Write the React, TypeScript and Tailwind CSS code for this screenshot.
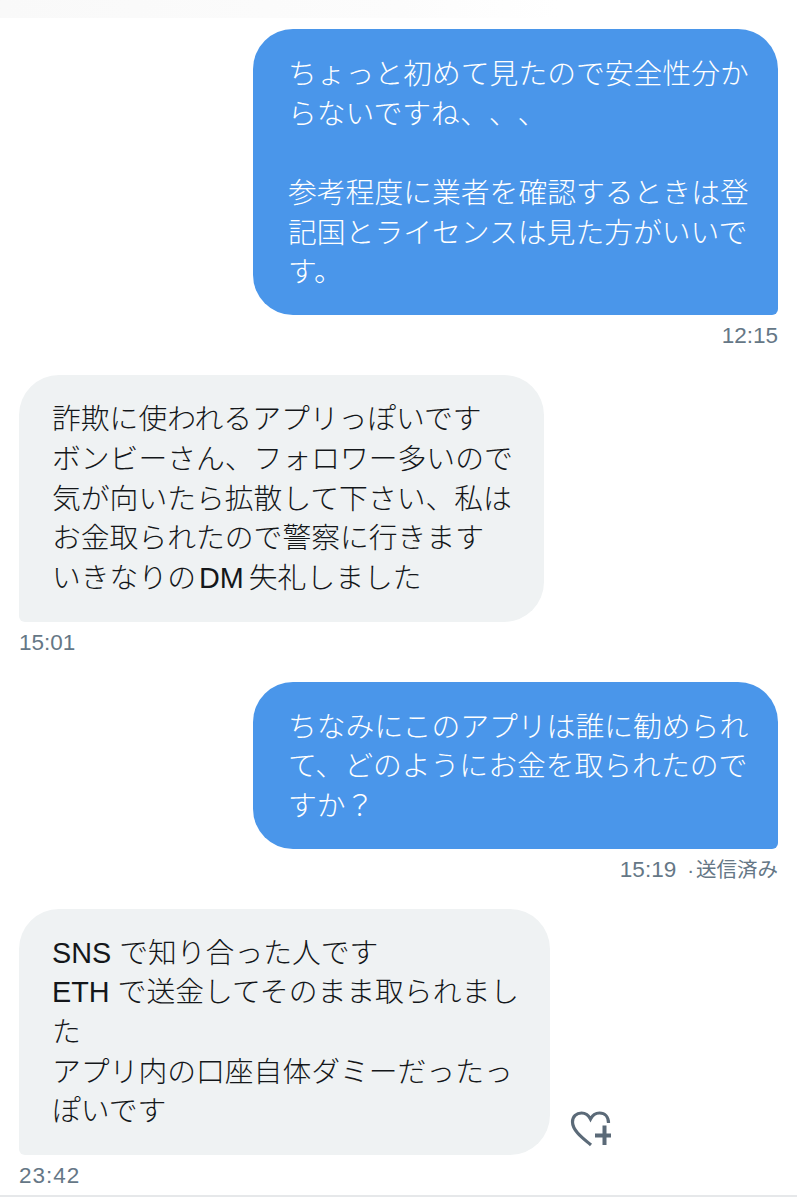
const FONT = "font-['Liberation_Sans','Noto_Sans_CJK_JP',sans-serif]";

function Sent({ lines, meta }: { lines: string[]; meta: React.ReactNode }) {
  return (
    <div className="flex flex-col items-end">
      <div className="w-[525px] rounded-[40px] rounded-br-[6px] bg-[#4a96ea] pl-[35px] pt-[26px] pb-[22px] text-[28.8px] leading-[39.7px] font-light text-white whitespace-nowrap [text-spacing-trim:space-all]">
        {lines.map((l, i) => (
          <div key={i} className="h-[39.7px]">{l}</div>
        ))}
      </div>
      <div className="mt-[7px] h-[28px] text-[22.5px] leading-[28px] text-[#657786]">{meta}</div>
    </div>
  );
}

function Received({ lines, meta, width, extra }: { lines: React.ReactNode[]; meta: React.ReactNode; width: string; extra?: React.ReactNode }) {
  return (
    <div className="flex flex-col items-start">
      <div className="flex items-end">
        <div className={`${width} rounded-[40px] rounded-bl-[6px] bg-[#eff2f3] pl-[33px] pt-[25px] pb-[23px] text-[28.8px] leading-[39.7px] font-light text-[#14171a] whitespace-nowrap [text-spacing-trim:space-all]`}>
          {lines.map((l, i) => (
            <div key={i} className="h-[39.7px]">{l}</div>
          ))}
        </div>
        {extra}
      </div>
      <div className="mt-[7px] h-[28px] text-[22.5px] leading-[28px] text-[#657786]">{meta}</div>
    </div>
  );
}

function HeartPlus() {
  return (
    <svg className="ml-[20px] mb-[6px] w-[43px] h-[38px]" viewBox="0 0 43 38" fill="none">
      <path
        d="M21 34 C14 28 2.5 20 2.5 11 C2.5 5.5 6.5 2 11.5 2 C15.5 2 18.5 4 20.5 8 C22.5 4 25.5 2 29.5 2 C35 2 38.5 6 38.5 12"
        stroke="#5b6a78"
        strokeWidth="3.2"
      />
      <path d="M34.5 14.5 V34 M25 24.5 H41" stroke="#5b6a78" strokeWidth="4" />
    </svg>
  );
}

export default function App() {
  return (
    <div className={`${FONT} w-[797px] h-[1200px] bg-white overflow-hidden flex flex-col`}>
      <div className="h-[18px] shrink-0 bg-gradient-to-r from-[#f9f9f9] via-[#fcfcfc] to-white to-70%" />
      <div className="flex-1 pt-[11px] px-[19px] flex flex-col gap-[25px]">
        <Sent
          lines={[
            "ちょっと初めて見たので安全性分か",
            "らないですね、、、",
            "\u00a0",
            "参考程度に業者を確認するときは登",
            "記国とライセンスは見た方がいいで",
            "す。",
          ]}
          meta="12:15"
        />
        <Received
          width="w-[525px]"
          lines={[
            "詐欺に使われるアプリっぽいです",
            "ボンビーさん、フォロワー多いので",
            "気が向いたら拡散して下さい、私は",
            "お金取られたので警察に行きます",
            <>いきなりの<span className="ml-[3px] mr-[5px]">DM</span>失礼しました</>,
          ]}
          meta="15:01"
        />
        <Sent
          lines={[
            "ちなみにこのアプリは誰に勧められ",
            "て、どのようにお金を取られたので",
            "すか？",
          ]}
          meta={
            <span className="flex items-center">
              15:19<span className="ml-[11px] text-[20.5px]">·</span><span className="ml-[2px] text-[20.5px]">送信済み</span>
            </span>
          }
        />
        <Received
          width="w-[531px]"
          lines={[
            "SNS で知り合った人です",
            "ETH で送金してそのまま取られまし",
            "た",
            "アプリ内の口座自体ダミーだったっ",
            "ぽいです",
          ]}
          meta={<span className="tracking-[1px]">23:42</span>}
          extra={<HeartPlus />}
        />
      </div>
      <div className="h-[2px] mb-[3px] shrink-0 bg-[#e6e8ea]" />
    </div>
  );
}
